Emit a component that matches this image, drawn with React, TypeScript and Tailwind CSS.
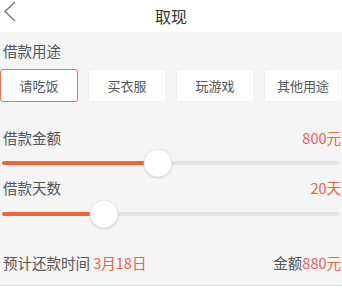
import React from "react";

const font = { fontFamily: '"Noto Sans CJK SC", "Noto Sans", sans-serif' };

function Slider({ fill, thumb }: { fill: number; thumb: number }) {
  return (
    <div className="relative mx-[2px] h-[4px] rounded-full bg-[#e5e5e5]">
      <div
        className="absolute left-0 top-0 h-[4px] rounded-l-full bg-[#f0643c]"
        style={{ width: fill }}
      />
      <div
        className="absolute top-1/2 h-[29px] w-[29px] -translate-x-1/2 -translate-y-1/2 rounded-full border border-[#e4e4e4] bg-white shadow-[0_1px_2px_rgba(0,0,0,0.12)]"
        style={{ left: thumb }}
      />
    </div>
  );
}

export default function App() {
  const purposes = ["请吃饭", "买衣服", "玩游戏", "其他用途"];
  return (
    <div className="w-[342px] h-[298px] overflow-hidden bg-[#f5f5f5]" style={font}>
      <div className="relative flex h-[32px] items-center justify-center bg-white">
        <svg
          className="absolute left-[3px] top-[1px]"
          width="14"
          height="21"
          viewBox="0 0 14 21"
        >
          <path d="M12 1 L2 10.5 L12 20" fill="none" stroke="#777" strokeWidth="1.4" />
        </svg>
        <span className="text-[16px] text-[#333] leading-none">取现</span>
      </div>

      <div className="flex h-[37px] items-center px-[3px] text-[14.5px] text-[#555]">借款用途</div>

      <div className="grid h-[33px] grid-cols-4 gap-[10px]">
        {purposes.map((p, i) => (
          <div
            key={p}
            className={
              "flex items-center justify-center rounded-[3px] bg-white text-[13px] text-[#555] " +
              (i === 0 ? "border border-[#e07a55]" : "border border-[#f2f2f2]")
            }
          >
            {p}
          </div>
        ))}
      </div>

      <div className="mt-[24px] flex h-[24px] items-center justify-between pl-[3px] pr-[1px] text-[14.5px]">
        <span className="text-[#555]">借款金额</span>
        <span className="text-[#e8644a]">800元</span>
      </div>
      <div className="flex h-[26px] flex-col justify-center">
        <Slider fill={143} thumb={156} />
      </div>

      <div className="flex h-[24px] items-center justify-between pl-[3px] pr-[1px] text-[14.5px]">
        <span className="text-[#555]">借款天数</span>
        <span className="text-[#e8644a]">20天</span>
      </div>
      <div className="flex h-[28px] flex-col justify-center">
        <Slider fill={90} thumb={102} />
      </div>

      <div className="mt-[23px] flex h-[24px] items-center justify-between pl-[3px] pr-[1px] text-[14.5px]">
        <span className="text-[#555]">
          预计还款时间 <span className="text-[#e8644a]">3月18日</span>
        </span>
        <span className="text-[#555]">
          金额<span className="text-[#e8644a]">880元</span>
        </span>
      </div>

      <div className="mt-[10px] h-[14px] border-t border-[#dcdcdc] bg-white" />
    </div>
  );
}
